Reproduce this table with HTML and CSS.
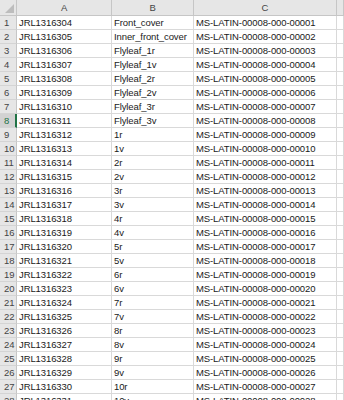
FILE: index.html
```html
<!DOCTYPE html>
<html>
<head>
<meta charset="utf-8">
<link rel="stylesheet" href="styles.css">
</head>
<body>
<div class="sheet">
  <div class="hd corner"><span class="tri"></span></div>
  <div class="hd col">A</div>
  <div class="hd col">B</div>
  <div class="hd col">C</div>
  <div class="hd col"></div>

  <div class="rh">1</div><div class="c">JRL1316304</div><div class="c">Front_cover</div><div class="c">MS-LATIN-00008-000-00001</div><div class="c"></div>
  <div class="rh">2</div><div class="c">JRL1316305</div><div class="c">Inner_front_cover</div><div class="c">MS-LATIN-00008-000-00002</div><div class="c"></div>
  <div class="rh">3</div><div class="c">JRL1316306</div><div class="c">Flyleaf_1r</div><div class="c">MS-LATIN-00008-000-00003</div><div class="c"></div>
  <div class="rh">4</div><div class="c">JRL1316307</div><div class="c">Flyleaf_1v</div><div class="c">MS-LATIN-00008-000-00004</div><div class="c"></div>
  <div class="rh">5</div><div class="c">JRL1316308</div><div class="c">Flyleaf_2r</div><div class="c">MS-LATIN-00008-000-00005</div><div class="c"></div>
  <div class="rh">6</div><div class="c">JRL1316309</div><div class="c">Flyleaf_2v</div><div class="c">MS-LATIN-00008-000-00006</div><div class="c"></div>
  <div class="rh">7</div><div class="c">JRL1316310</div><div class="c">Flyleaf_3r</div><div class="c">MS-LATIN-00008-000-00007</div><div class="c"></div>
  <div class="rh sel">8</div><div class="c">JRL1316311</div><div class="c">Flyleaf_3v</div><div class="c">MS-LATIN-00008-000-00008</div><div class="c"></div>
  <div class="rh">9</div><div class="c">JRL1316312</div><div class="c">1r</div><div class="c">MS-LATIN-00008-000-00009</div><div class="c"></div>
  <div class="rh">10</div><div class="c">JRL1316313</div><div class="c">1v</div><div class="c">MS-LATIN-00008-000-00010</div><div class="c"></div>
  <div class="rh">11</div><div class="c">JRL1316314</div><div class="c">2r</div><div class="c">MS-LATIN-00008-000-00011</div><div class="c"></div>
  <div class="rh">12</div><div class="c">JRL1316315</div><div class="c">2v</div><div class="c">MS-LATIN-00008-000-00012</div><div class="c"></div>
  <div class="rh">13</div><div class="c">JRL1316316</div><div class="c">3r</div><div class="c">MS-LATIN-00008-000-00013</div><div class="c"></div>
  <div class="rh">14</div><div class="c">JRL1316317</div><div class="c">3v</div><div class="c">MS-LATIN-00008-000-00014</div><div class="c"></div>
  <div class="rh">15</div><div class="c">JRL1316318</div><div class="c">4r</div><div class="c">MS-LATIN-00008-000-00015</div><div class="c"></div>
  <div class="rh">16</div><div class="c">JRL1316319</div><div class="c">4v</div><div class="c">MS-LATIN-00008-000-00016</div><div class="c"></div>
  <div class="rh">17</div><div class="c">JRL1316320</div><div class="c">5r</div><div class="c">MS-LATIN-00008-000-00017</div><div class="c"></div>
  <div class="rh">18</div><div class="c">JRL1316321</div><div class="c">5v</div><div class="c">MS-LATIN-00008-000-00018</div><div class="c"></div>
  <div class="rh">19</div><div class="c">JRL1316322</div><div class="c">6r</div><div class="c">MS-LATIN-00008-000-00019</div><div class="c"></div>
  <div class="rh">20</div><div class="c">JRL1316323</div><div class="c">6v</div><div class="c">MS-LATIN-00008-000-00020</div><div class="c"></div>
  <div class="rh">21</div><div class="c">JRL1316324</div><div class="c">7r</div><div class="c">MS-LATIN-00008-000-00021</div><div class="c"></div>
  <div class="rh">22</div><div class="c">JRL1316325</div><div class="c">7v</div><div class="c">MS-LATIN-00008-000-00022</div><div class="c"></div>
  <div class="rh">23</div><div class="c">JRL1316326</div><div class="c">8r</div><div class="c">MS-LATIN-00008-000-00023</div><div class="c"></div>
  <div class="rh">24</div><div class="c">JRL1316327</div><div class="c">8v</div><div class="c">MS-LATIN-00008-000-00024</div><div class="c"></div>
  <div class="rh">25</div><div class="c">JRL1316328</div><div class="c">9r</div><div class="c">MS-LATIN-00008-000-00025</div><div class="c"></div>
  <div class="rh">26</div><div class="c">JRL1316329</div><div class="c">9v</div><div class="c">MS-LATIN-00008-000-00026</div><div class="c"></div>
  <div class="rh">27</div><div class="c">JRL1316330</div><div class="c">10r</div><div class="c">MS-LATIN-00008-000-00027</div><div class="c"></div>
  <div class="rh">28</div><div class="c">JRL1316331</div><div class="c">10v</div><div class="c">MS-LATIN-00008-000-00028</div><div class="c"></div>
</div>
</body>
</html>
```

FILE: styles.css
```css
html, body {
  margin: 0;
  padding: 0;
  background: #ffffff;
  overflow: hidden;
}

.sheet {
  display: grid;
  grid-template-columns: 17px 95px 82px 143px 1fr;
  grid-template-rows: 16px;
  grid-auto-rows: 14px;
  width: 344px;
  font-family: "Liberation Sans", Arial, sans-serif;
  font-size: 9.5px;
  letter-spacing: -0.1px;
  color: #1a1a1a;
}

.hd {
  box-sizing: border-box;
  background: #e6e6e6;
  border-right: 1px solid #c6c6c6;
  border-bottom: 1px solid #c6c6c6;
  color: #444444;
  display: flex;
  align-items: center;
  justify-content: center;
  line-height: 1;
}

.corner {
  position: relative;
}

.tri {
  position: absolute;
  right: 2px;
  bottom: 2px;
  width: 0;
  height: 0;
  border-left: 9px solid transparent;
  border-bottom: 9px solid #bdbdbd;
}

.rh {
  box-sizing: border-box;
  background: #e6e6e6;
  border-right: 1px solid #c6c6c6;
  border-bottom: 1px solid #d4d4d4;
  color: #444444;
  padding-left: 4px;
  display: flex;
  align-items: center;
  line-height: 1;
}

.rh.sel {
  background: #d2d2d2;
  color: #217346;
  border-right: 2px solid #217346;
}

.c {
  box-sizing: border-box;
  border-right: 1px solid #d9d9d9;
  border-bottom: 1px solid #d9d9d9;
  padding-left: 2px;
  display: flex;
  align-items: center;
  white-space: nowrap;
  overflow: hidden;
  line-height: 1;
}
```
